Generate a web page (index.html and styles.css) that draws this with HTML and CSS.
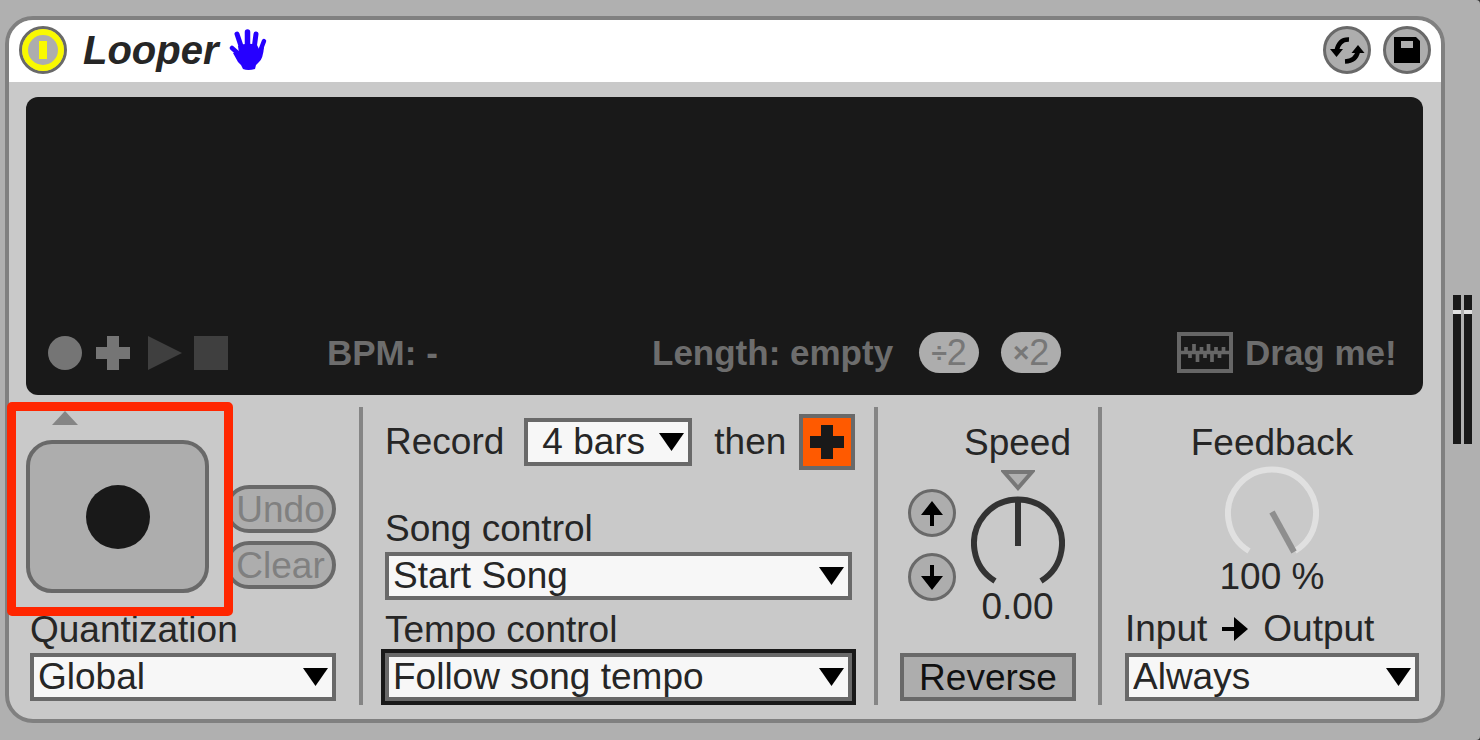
FILE: index.html
```html
<!DOCTYPE html>
<html lang="en">
<head>
<meta charset="utf-8">
<title>Looper</title>
<link rel="stylesheet" href="styles.css">
</head>
<body>
<main class="rack">
  <section class="device">
    <header class="titlebar">
      <button class="round power" aria-label="Device on">
        <svg width="42" height="42" viewBox="0 0 42 42"><circle cx="21" cy="21" r="21" fill="#f9f900"/><circle cx="21" cy="21" r="15" fill="#adadad"/><rect x="17" y="12" width="8" height="18" fill="#f9f900"/></svg>
      </button>
      <h1 class="title">Looper</h1>
      <svg class="hand" width="38" height="42" viewBox="0 0 38 42">
        <g fill="none" stroke="#2600ff" stroke-linecap="round"><path stroke-width="4.500" d="M3 19 12 27"/><path stroke-width="5" d="M8 5 13 20"/><path stroke-width="5.500" d="M18.500 3V20"/><path stroke-width="5" d="M27 5 25 20"/><path stroke-width="4.500" d="M35 12 30 25"/></g>
        <path fill="#2600ff" d="M9 17Q18 13 28 16L30 20 35 18Q34 30 30 33L27 36 26 40Q19 42 14 40L12 36 9 33 4 24 8 23 10 24Z"/>
      </svg>
      <div class="title-actions">
        <button class="round" aria-label="Hot-swap presets">
          <svg width="42" height="42" viewBox="0 0 42 42"><g fill="none" stroke="#000" stroke-width="4.500"><path d="M23 10.500Q13 10 10.500 22"/><path d="M19 32.500Q30 32 32 22"/></g><path d="M4 20H17L10.500 28Z M25.500 24H38.500L32 16Z"/></svg>
        </button>
        <button class="round" aria-label="Save preset">
          <svg width="42" height="42" viewBox="0 0 42 42"><path fill-rule="evenodd" d="M8 8H30L34 12V34H8Z M15 12V19H27V12Z"/></svg>
        </button>
      </div>
    </header>

    <div class="display">
      <div class="status">
        <div class="transport">
          <button class="mode" aria-label="Record"><svg width="34" height="34"><circle cx="17" cy="17" r="17" fill="#757575"/></svg></button>
          <button class="mode" aria-label="Overdub"><svg width="34" height="34"><path fill="#757575" d="M11 0H23V11H34V23H23V34H11V23H0V11H11Z"/></svg></button>
          <button class="mode" aria-label="Play"><svg width="38" height="34"><path fill="#3f3f3f" d="M4 0 38 17 4 34Z"/></svg></button>
          <button class="mode stop" aria-label="Stop"><svg width="34" height="34"><path fill="#3f3f3f" d="M0 0H34V34H0Z"/></svg></button>
        </div>
        <span>BPM: -</span>
        <div class="length">
          <span class="length-text">Length: empty</span>
          <button class="pill" aria-label="Halve length"><span class="operator">÷</span>2</button>
          <button class="pill" aria-label="Double length"><span class="operator">×</span>2</button>
        </div>
        <div class="drag">
          <svg width="56" height="41" viewBox="0 0 56 41"><rect x="2" y="2" width="52" height="37" fill="none" stroke="#666" stroke-width="4"/><path d="M4 20.500H52M9 15V21M13 20V26M17 12V21M20.500 20V30M24.500 15V21M28 20V26M31.500 12V21M35 20V30M39 15V21M42.500 20V26M46.500 15V21" fill="none" stroke="#666" stroke-width="3.700"/></svg>
          <span>Drag me!</span>
        </div>
      </div>
    </div>

    <div class="controls">
      <section class="panel transport-panel">
        <svg class="marker" width="26" height="14"><path fill="#858585" d="M13 0 26 14H0Z"/></svg>
        <div class="loop-row">
          <button class="record" aria-label="Multi-purpose transport"><svg width="64" height="64"><circle cx="32" cy="32" r="32" fill="#191919"/></svg></button>
          <div class="edits">
            <button class="edit" disabled>Undo</button>
            <button class="edit" disabled>Clear</button>
          </div>
        </div>
        <div class="field quantize">
          <label class="label" for="quantization">Quantization</label>
          <div class="picker"><select id="quantization"><option>Global</option></select><svg width="25" height="18"><path d="M0 0H25L12.500 18Z"/></svg></div>
        </div>
        <div class="highlight"></div>
      </section>

      <section class="panel song-panel">
        <div class="record-row">
          <label for="record-length">Record</label>
          <div class="picker bars"><select id="record-length"><option>4 bars</option></select><svg width="25" height="18"><path d="M0 0H25L12.500 18Z"/></svg></div>
          <span>then</span>
          <button class="overdub" aria-label="Overdub after recording"><svg width="34" height="34"><path fill="#191919" d="M11 0H23V11H34V23H23V34H11V23H0V11H11Z"/></svg></button>
        </div>
        <div class="field song">
          <label class="label" for="song-control">Song control</label>
          <div class="picker"><select id="song-control"><option>Start Song</option></select><svg width="25" height="18"><path d="M0 0H25L12.500 18Z"/></svg></div>
        </div>
        <div class="field">
          <label class="label" for="tempo-control">Tempo control</label>
          <div class="picker selected"><select id="tempo-control"><option>Follow song tempo</option></select><svg width="25" height="18"><path d="M0 0H25L12.500 18Z"/></svg></div>
        </div>
      </section>

      <section class="panel speed-panel">
        <div class="speed-row">
          <div class="steppers">
            <button class="round" aria-label="Raise speed"><svg width="42" height="42"><path d="M21 9 32 23H23V34H19V23H10Z"/></svg></button>
            <button class="round" aria-label="Lower speed"><svg width="42" height="42"><path d="M21 34 32 20H23V9H19V20H10Z"/></svg></button>
          </div>
          <div class="dial">
            <label class="label" for="speed">Speed</label>
            <svg class="reset" width="34" height="22"><path d="M3 2H31L17 18Z" fill="#b0b0b0" stroke="#777" stroke-width="4"/></svg>
            <div class="knob">
              <svg width="94" height="90"><path d="M24 85A44 44 0 1 1 70 85M47 50V5" fill="none" stroke="#333" stroke-width="6"/></svg>
              <input id="speed" type="range" min="-36" max="36" value="0">
            </div>
            <output class="value" for="speed">0.00</output>
          </div>
        </div>
        <button class="reverse">Reverse</button>
      </section>

      <section class="panel feedback-panel">
        <div class="dial">
          <label class="label" for="feedback">Feedback</label>
          <div class="knob">
            <svg width="94" height="90"><path d="M24 85A44 44 0 1 1 70 85" fill="none" stroke="#e0e0e0" stroke-width="6"/><path d="M47 46 69 86" stroke="#8e8e8e" stroke-width="6"/></svg>
            <input id="feedback" type="range" min="0" max="100" value="100">
          </div>
          <output class="value" for="feedback">100 %</output>
        </div>
        <div class="field">
          <label class="label routing" for="monitor">Input <svg width="26" height="24"><path d="M0 10H12V0L26 12 12 24V14H0Z"/></svg> Output</label>
          <div class="picker"><select id="monitor"><option>Always</option></select><svg width="25" height="18"><path d="M0 0H25L12.500 18Z"/></svg></div>
        </div>
      </section>
    </div>
  </section>

  <div class="meter" role="img" aria-label="Output level"><i></i><i></i></div>
</main>
</body>
</html>
```
FILE: styles.css
```css
* {
  box-sizing: border-box;
}

html {
  background: #333;
}

body {
  margin: 0;
  font: 37px/50px "Liberation Sans", Arial, sans-serif;
  color: #262626;
}

button,
select {
  margin: 0;
  padding: 0;
  font: inherit;
  color: inherit;
}

svg {
  display: block;
  flex: none;
}

.rack {
  display: flex;
  align-items: center;
  gap: 8px;
  min-height: 100vh;
  padding: 16px 8px 17px 5px;
  background: #b0b0b0;
  border-radius: 0 4px 4px 0;
}

.device {
  flex: 1;
  padding-bottom: 14px;
  background: #c9c9c9;
  border: 4px solid #808080;
  border-radius: 28px;
}

.titlebar {
  display: flex;
  align-items: center;
  height: 62px;
  padding: 0 10px 2px;
  background: #fff;
  border-radius: 24px 24px 0 0;
}

.title {
  margin: 0 10px 0 16px;
  font-size: 40px;
  font-style: italic;
  line-height: 44px;
}

.title-actions {
  display: flex;
  gap: 12px;
  margin-left: auto;
}

.round {
  display: grid;
  place-items: center;
  width: 48px;
  height: 48px;
  background: #adadad;
  border: 3px solid #696969;
  border-radius: 50%;
}

.display {
  display: flex;
  flex-direction: column;
  justify-content: flex-end;
  height: 298px;
  margin: 15px 18px 12px 17px;
  padding: 22px;
  background: #191919;
  border-radius: 12px;
}

.status {
  display: grid;
  grid-template-columns: 279fr 325fr 525fr 224fr;
  align-items: center;
  height: 41px;
  font-size: 35px;
  font-weight: bold;
  line-height: 40px;
  color: #6d6d6d;
}

.transport,
.length,
.drag {
  display: flex;
  align-items: center;
}

.transport {
  gap: 14px;
}

.mode {
  background: none;
  border: 0;
}

.stop {
  margin-left: -2px;
}

.length {
  gap: 22px;
}

.length-text {
  padding-right: 4px;
}

.drag {
  gap: 12px;
}

.pill {
  display: flex;
  align-items: center;
  justify-content: center;
  width: 60px;
  height: 41px;
  font-size: 36px;
  font-weight: normal;
  color: #777;
  background: #adadad;
  border: 0;
  border-radius: 21px;
}

.operator {
  font-size: 28px;
  font-weight: bold;
}

.controls {
  display: grid;
  grid-template-columns: 350fr 515fr 224fr 343fr;
}

.panel {
  display: flex;
  flex-direction: column;
  min-width: 0;
  min-height: 298px;
  padding-bottom: 4px;
}

.panel + .panel {
  border-left: 4px solid #858585;
}

.transport-panel {
  position: relative;
  padding: 4px 23px 4px 17px;
}

.marker {
  margin: 0 0 15px 26px;
}

.loop-row {
  display: flex;
  gap: 16px;
}

.record {
  display: grid;
  flex: 1;
  place-items: center;
  height: 153px;
  background: #adadad;
  border: 4px solid #696969;
  border-radius: 26px;
}

.edits {
  display: flex;
  flex-direction: column;
  gap: 8px;
  justify-content: flex-end;
  padding-bottom: 4px;
}

.edit {
  width: 111px;
  height: 48px;
  line-height: 42px;
  color: #808080;
  background: #adadad;
  border: 4px solid #696969;
  border-radius: 24px;
}

.highlight {
  position: absolute;
  top: -5px;
  left: -2px;
  width: 226px;
  height: 214px;
  border: 9px solid #ff2600;
  border-radius: 5px;
  pointer-events: none;
}

.field {
  margin-top: auto;
}

.quantize {
  margin-left: 4px;
}

.label {
  display: block;
  height: 48px;
}

.picker {
  display: grid;
  align-items: center;
}

.picker > * {
  grid-area: 1 / 1;
}

.picker select {
  width: 100%;
  height: 48px;
  padding: 0 32px 0 4px;
  line-height: 40px;
  appearance: none;
  background: #f7f7f7;
  border: 4px solid #696969;
  border-radius: 0;
}

.picker svg {
  justify-self: end;
  margin-right: 8px;
  pointer-events: none;
}

.selected {
  outline: 4px solid #191919;
}

.song-panel {
  padding: 7px 22px 4px;
}

.record-row {
  display: flex;
  align-items: center;
  margin-right: -3px;
}

.bars {
  width: 168px;
  margin: 0 22px 0 20px;
}

.bars select {
  padding-left: 14px;
}

.overdub {
  display: grid;
  place-items: center;
  width: 56px;
  height: 56px;
  margin-left: auto;
  background: #ff5a00;
  border: 4px solid #696969;
}

.song + .field {
  margin-top: 5px;
}

.speed-panel {
  justify-content: space-between;
  padding: 11px 22px 4px;
}

.speed-row {
  display: flex;
  gap: 8px;
  justify-content: center;
  padding-left: 3px;
}

.steppers {
  display: flex;
  flex-direction: column;
  gap: 16px;
  padding-top: 71px;
}

.dial {
  display: flex;
  flex-direction: column;
  align-items: center;
}

.reset {
  margin: 4px 0;
}

.knob {
  display: grid;
}

.knob > * {
  grid-area: 1 / 1;
}

.knob input {
  width: 94px;
  height: 90px;
  margin: 0;
  opacity: 0;
}

.value {
  line-height: 42px;
}

.reverse {
  height: 48px;
  line-height: 42px;
  color: #111;
  background: #adadad;
  border: 4px solid #696969;
}

.feedback-panel {
  padding: 11px 22px 4px 23px;
}

.routing {
  display: flex;
  gap: 15px;
  align-items: center;
}

.meter {
  display: flex;
  gap: 3px;
  height: 149px;
}

.meter i {
  width: 8px;
  background: linear-gradient(#191919 15px, #e0e0e0 15px 19px, #191919 19px);
}
```
